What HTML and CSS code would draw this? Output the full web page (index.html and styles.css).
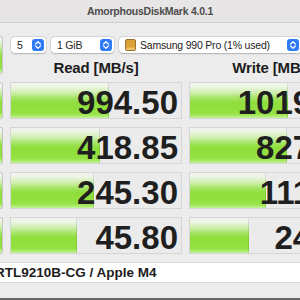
FILE: index.html
```html
<!DOCTYPE html>
<html>
	<head>
		<meta charset="utf-8" />
		<title>AmorphousDiskMark</title>
		<link rel="stylesheet" href="styles.css">
	</head>
	<body>
		<div class="window">
			<!-- title bar -->
			<div class="titlebar">AmorphousDiskMark 4.0.1</div>
			<div class="main">
				<div class="btn all"></div>
				<!-- settings -->
				<div class="controls">
					<div class="select count">
						<span>5</span>
						<svg class="stepper" viewBox="0 0 12 12"><rect width="12" height="12" rx="3"/><path d="M3.6 5 L6 2.7 L8.4 5 M3.6 7 L6 9.3 L8.4 7"/></svg>
					</div>
					<div class="select size">
						<span>1 GiB</span>
						<svg class="stepper" viewBox="0 0 12 12"><rect width="12" height="12" rx="3"/><path d="M3.6 5 L6 2.7 L8.4 5 M3.6 7 L6 9.3 L8.4 7"/></svg>
					</div>
					<div class="select drive">
						<svg class="disk" viewBox="0 0 11 12"><rect x="0.5" y="0.5" width="10" height="11" rx="1.5" class="disk-body"/><rect x="1.2" y="8.6" width="8.6" height="2.2" class="disk-base"/></svg>
						<span>Samsung 990 Pro (1% used)</span>
						<svg class="stepper" viewBox="0 0 12 12"><rect width="12" height="12" rx="3"/><path d="M3.6 5 L6 2.7 L8.4 5 M3.6 7 L6 9.3 L8.4 7"/></svg>
					</div>
				</div>
				<div class="head">Read [MB/s]</div>
				<div class="head">Write [MB/s]</div>
				<!-- results -->
				<div class="btn"></div>
				<div class="result"><div class="fill" style="width:98px"></div><div class="value">994.50</div></div>
				<div class="result"><div class="fill" style="width:98px"></div><div class="value">1019.63</div></div>
				<div class="btn"></div>
				<div class="result"><div class="fill" style="width:89px"></div><div class="value">418.85</div></div>
				<div class="result"><div class="fill" style="width:97px"></div><div class="value">827.41</div></div>
				<div class="btn"></div>
				<div class="result"><div class="fill" style="width:83px"></div><div class="value">245.30</div></div>
				<div class="result"><div class="fill" style="width:76px"></div><div class="value">111.92</div></div>
				<div class="btn"></div>
				<div class="result"><div class="fill" style="width:66px"></div><div class="value">45.80</div></div>
				<div class="result"><div class="fill" style="width:59px"></div><div class="value">24.57</div></div>
				<!-- comment -->
				<div class="comment">RTL9210B-CG / Apple M4</div>
			</div>
		</div>
	</body>
</html>
```
FILE: styles.css
```css
html,
body {
	margin: 0;
	width: 300px;
	height: 300px;
	overflow: hidden;
	font-family: "Liberation Sans", Arial, sans-serif;
}
.window
{
	width: 300px;
	height: 300px;
	box-sizing: border-box;
	background: #ececec;
	border-bottom: 2px solid #666;
	overflow: hidden;
	display: flex;
	flex-direction: column;
}
.titlebar
{
	height: 22px;
	line-height: 22px;
	flex-shrink: 0;
	background: #e7e5e5;
	border-bottom: 1px solid #d2d0d0;
	text-align: center;
	font-size: 10.5px;
	font-weight: bold;
	letter-spacing: -0.25px;
	color: #4d4d4d;
}
.main
{
	display: grid;
	grid-template-columns: 50px 172px 172px;
	grid-template-rows: 18px 12px repeat(4, 37px) 21px;
	column-gap: 7px;
	row-gap: 8px;
	width: 415px;
	margin-left: -47px;
	padding-top: 13px;
	flex-shrink: 0;
}
/* green gradient used by buttons and bars */
.btn,
.fill
{
	background: linear-gradient(#f2f2f2 0%, #edf5e4 10%, #cdeeaa 28%, #a4e462 42%, #8fde3c 55%, #94e243 85%, #b4ee7c 94%, #d8f7bd 100%);
}
.btn
{
	border: 1px solid #c6c6c6;
	border-radius: 2px;
}
.all
{
	grid-row: 1 / 3;
}
.controls
{
	grid-column: 2 / 4;
	display: flex;
	align-items: center;
	gap: 5px;
	padding-left: 1px;
}
.select
{
	height: 16px;
	box-sizing: border-box;
	background: #fff;
	border-radius: 4px;
	box-shadow: 0 0 0 0.5px rgba(0, 0, 0, 0.12), 0 0.5px 1.5px rgba(0, 0, 0, 0.2);
	display: flex;
	align-items: center;
	padding: 0 2px 0 6px;
	font-size: 10.5px;
	letter-spacing: -0.2px;
	color: #222;
}
.select span
{
	flex: 1;
	white-space: nowrap;
}
.count
{
	width: 35px;
}
.size
{
	width: 63px;
	margin-right: 0;
}
.drive
{
	width: 182px;
	padding-left: 6px;
}
.stepper
{
	width: 12px;
	height: 12px;
	flex-shrink: 0;
}
.stepper rect
{
	fill: #2f7bf5;
}
.stepper path
{
	fill: none;
	stroke: #fff;
	stroke-width: 1.2;
	stroke-linecap: round;
	stroke-linejoin: round;
}
.disk
{
	width: 11px;
	height: 12px;
	margin-right: 4px;
	flex-shrink: 0;
}
.disk-body
{
	fill: #dca238;
	stroke: #8a5a12;
	stroke-width: 0.8;
}
.disk-base
{
	fill: #f0c870;
}
.head
{
	text-align: center;
	line-height: 12px;
	font-size: 15px;
	font-weight: bold;
	letter-spacing: -0.15px;
	color: #1c1c1c;
	white-space: nowrap;
}
.result
{
	display: grid;
	border: 1px solid #d5d5d5;
	background: #ebebeb;
	overflow: hidden;
}
.fill,
.value
{
	grid-area: 1 / 1;
}
.fill
{
	height: 100%;
	border-right: 1px solid rgba(0, 0, 0, 0.1);
	box-sizing: border-box;
}
.value
{
	justify-self: end;
	align-self: center;
	padding: 3px 3px 0 0;
	font-size: 33px;
	font-weight: bold;
	color: #1f1f1f;
	line-height: 1;
}
.comment
{
	grid-column: 1 / -1;
	background: #fff;
	border-top: 1px solid #d8d8d8;
	border-bottom: 1px solid #d8d8d8;
	box-sizing: border-box;
	padding-left: 42px;
	line-height: 19px;
	font-size: 13.5px;
	font-weight: bold;
	color: #1c1c1c;
	white-space: nowrap;
}
```
